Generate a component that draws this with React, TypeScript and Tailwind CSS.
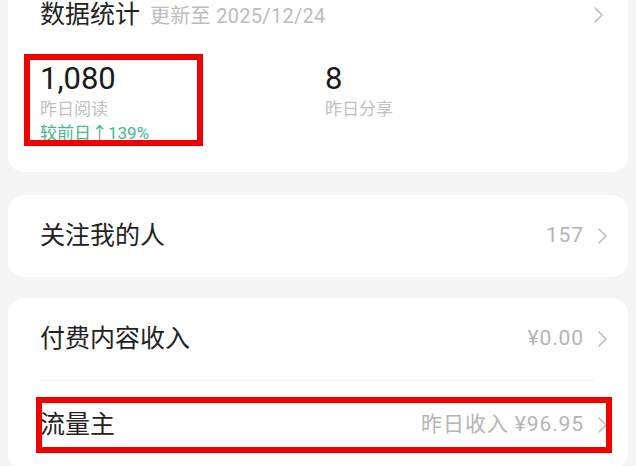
import type { ReactNode } from 'react'

function Chevron() {
  return (
    <svg viewBox="0 0 11 18" className="h-[18px] w-[11px] text-[#bdbdbd]" fill="none" stroke="currentColor" strokeWidth="1.6">
      <path d="M2 2l7 7-7 7" strokeLinecap="round" strokeLinejoin="round" />
    </svg>
  )
}

function Row({ label, value, tall }: { label: string; value?: ReactNode; tall?: boolean }) {
  return (
    <div className={`flex items-center justify-between pl-8 pr-[20px] ${tall ? 'h-[88px]' : 'h-[82px]'}`}>
      <span className="text-[25px] text-[#222]">{label}</span>
      <div className="flex items-center gap-[13px]">
        {value ? <span className="text-[21px] tracking-[0.9px] text-[#b5b5b5]">{value}</span> : null}
        <Chevron />
      </div>
    </div>
  )
}

export default function App() {
  return (
    <div
      className="relative h-[466px] w-[636px] overflow-hidden bg-[#f5f5f5]"
      style={{ fontFamily: 'Roboto, "Noto Sans CJK SC", sans-serif' }}
    >
      <div className="mx-2 -mt-4 rounded-2xl bg-white pt-4 pb-[27px] pl-8 pr-[24px]">
        <div className="flex h-[30px] items-center justify-between">
          <div className="flex items-baseline gap-[10px]">
            <span className="text-[25px] text-[#222]">数据统计</span>
            <span className="text-[20px] tracking-[0.3px] text-[#bcbcbc]">更新至 2025/12/24</span>
          </div>
          <Chevron />
        </div>
        <div className="mt-[30px] grid grid-cols-[285px_1fr]">
          <div className="flex flex-col">
            <span className="h-[37px] text-[31px] leading-[37px] text-[#1a1a1a]">1,080</span>
            <span className="text-[17px] leading-[24px] text-[#c0c0c0]">昨日阅读</span>
            <span className="text-[17px] leading-[24px] text-[#3fba8c]">较前日↑139%</span>
          </div>
          <div className="flex flex-col">
            <span className="h-[37px] text-[31px] leading-[37px] text-[#1a1a1a]">8</span>
            <span className="text-[17px] leading-[24px] text-[#c0c0c0]">昨日分享</span>
          </div>
        </div>
      </div>

      <div className="mx-2 mt-[23px] rounded-2xl bg-white">
        <Row label="关注我的人" value="157" />
      </div>

      <div className="mx-2 mt-[21px] rounded-2xl bg-white">
        <Row label="付费内容收入" value="¥0.00" />
        <div className="mx-8 h-px bg-[#f4f4f4]" />
        <Row label="流量主" value="昨日收入 ¥96.95" tall />
      </div>

      <div className="absolute left-[24px] top-[54px] h-[92px] w-[179px] border-[6px] border-[#f00000]" />
      <div className="absolute left-[36px] top-[397px] h-[56px] w-[576px] border-[6px] border-[#f00000]" />
    </div>
  )
}
